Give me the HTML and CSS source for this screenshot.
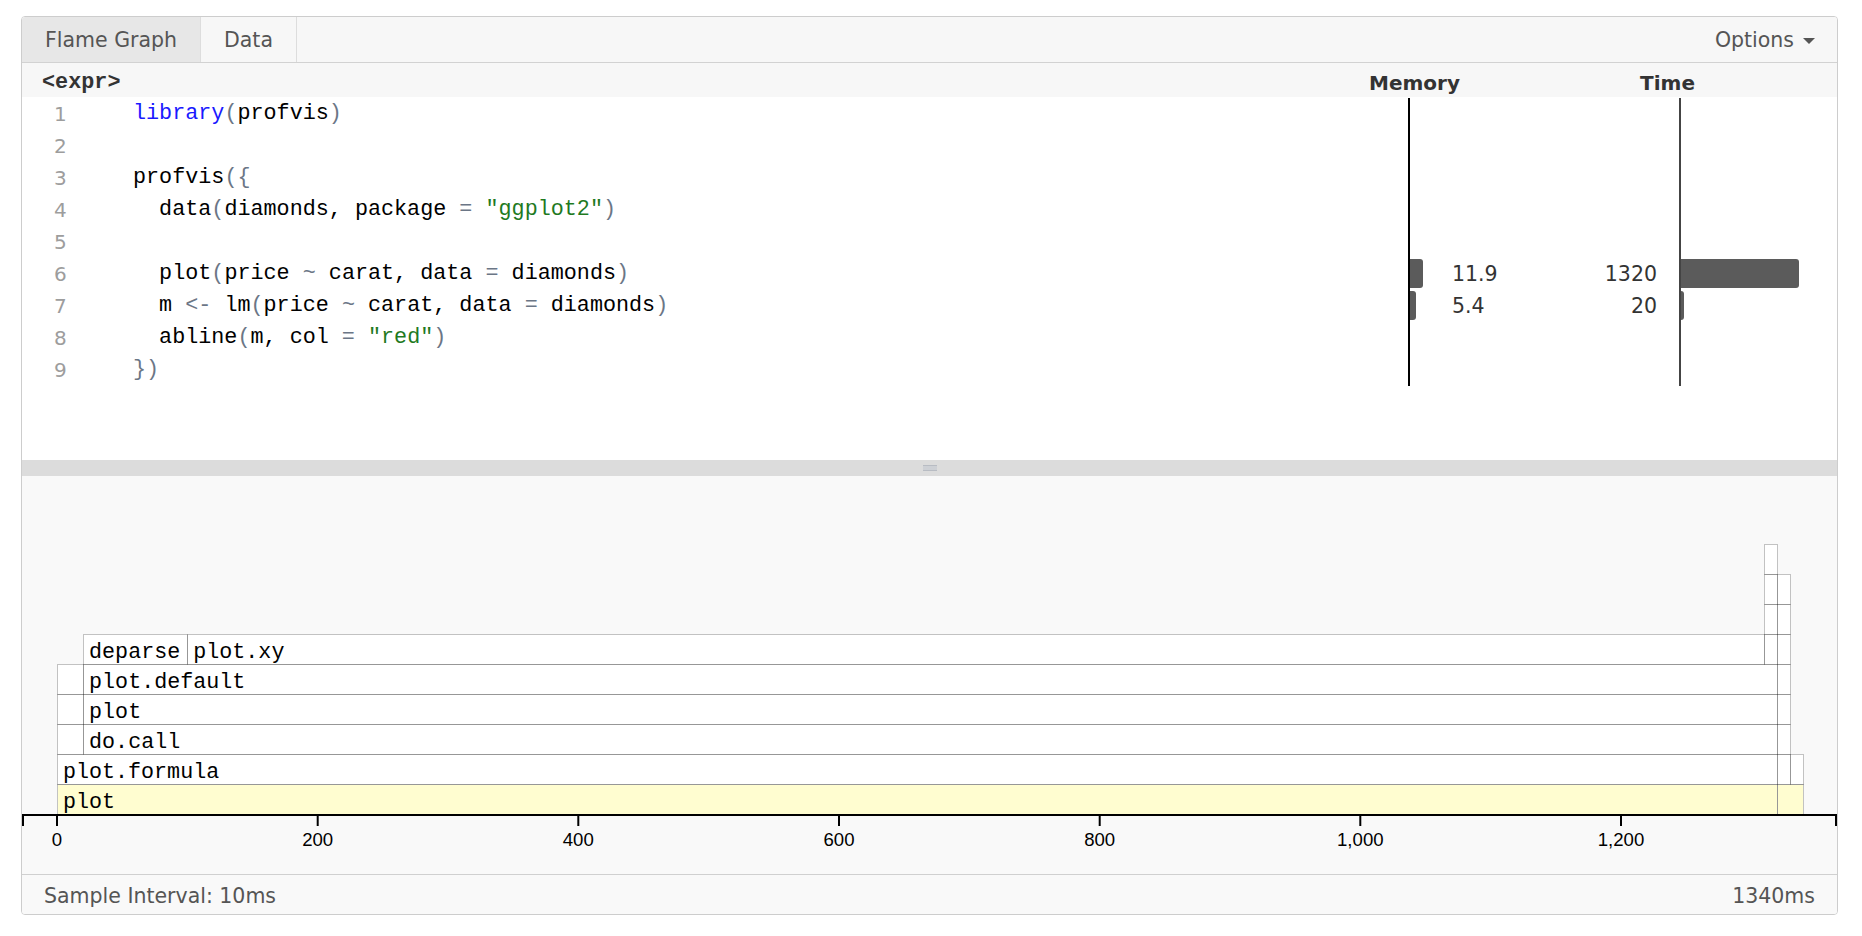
FILE: index.html
```html
<!DOCTYPE html>
<html>
<head>
<meta charset="utf-8">
<title>profvis</title>
<link rel="stylesheet" href="styles.css">
</head>
<body>
<div class="panel">
  <div class="tabbar">
    <div class="tab tab-flame active">Flame Graph</div>
    <div class="tab tab-data">Data</div>
    <div class="options">Options<span class="caret"></span></div>
  </div>

  <div class="code">
    <div class="codehead">
      <div class="expr">&lt;expr&gt;</div>
      <div class="hmem">Memory</div>
      <div class="htime">Time</div>
    </div>
    <div class="rows">
      <div class="row"><div class="ln">1</div><div class="src"><span class="kw">library</span><span class="pu">(</span>profvis<span class="pu">)</span></div><div class="membar"></div><div class="memval"></div><div class="timeval"></div><div class="timebar"></div></div>
      <div class="row"><div class="ln">2</div><div class="src"></div><div class="membar"></div><div class="memval"></div><div class="timeval"></div><div class="timebar"></div></div>
      <div class="row"><div class="ln">3</div><div class="src">profvis<span class="pu">({</span></div><div class="membar"></div><div class="memval"></div><div class="timeval"></div><div class="timebar"></div></div>
      <div class="row"><div class="ln">4</div><div class="src">  data<span class="pu">(</span>diamonds, package <span class="pu">=</span> <span class="st">"ggplot2"</span><span class="pu">)</span></div><div class="membar"></div><div class="memval"></div><div class="timeval"></div><div class="timebar"></div></div>
      <div class="row"><div class="ln">5</div><div class="src"></div><div class="membar"></div><div class="memval"></div><div class="timeval"></div><div class="timebar"></div></div>
      <div class="row"><div class="ln">6</div><div class="src">  plot<span class="pu">(</span>price <span class="pu">~</span> carat, data <span class="pu">=</span> diamonds<span class="pu">)</span></div><div class="membar"><div class="bar" style="width:13px"></div></div><div class="memval">11.9</div><div class="timeval">1320</div><div class="timebar"><div class="bar" style="width:118px"></div></div></div>
      <div class="row"><div class="ln">7</div><div class="src">  m <span class="pu">&lt;-</span> lm<span class="pu">(</span>price <span class="pu">~</span> carat, data <span class="pu">=</span> diamonds<span class="pu">)</span></div><div class="membar"><div class="bar" style="width:6px"></div></div><div class="memval">5.4</div><div class="timeval">20</div><div class="timebar"><div class="bar" style="width:3px"></div></div></div>
      <div class="row"><div class="ln">8</div><div class="src">  abline<span class="pu">(</span>m, col <span class="pu">=</span> <span class="st">"red"</span><span class="pu">)</span></div><div class="membar"></div><div class="memval"></div><div class="timeval"></div><div class="timebar"></div></div>
      <div class="row"><div class="ln">9</div><div class="src"><span class="pu">})</span></div><div class="membar"></div><div class="memval"></div><div class="timeval"></div><div class="timebar"></div></div>
    </div>
  </div>

  <div class="resizer"><div class="handle"></div></div>

  <div class="flame">
    <div class="cell hl" style="left:35px;top:308px;width:1721.4px">plot</div>
    <div class="cell hl" style="left:1755.4px;top:308px;width:27.1px"></div>

    <div class="cell" style="left:35px;top:278px;width:1721.4px">plot.formula</div>
    <div class="cell" style="left:1755.4px;top:278px;width:14px"></div>
    <div class="cell" style="left:1768.4px;top:278px;width:14px"></div>

    <div class="cell" style="left:35px;top:248px;width:27.1px"></div>
    <div class="cell" style="left:61.1px;top:248px;width:1695.3px">do.call</div>
    <div class="cell" style="left:1755.4px;top:248px;width:14px"></div>

    <div class="cell" style="left:35px;top:218px;width:27.1px"></div>
    <div class="cell" style="left:61.1px;top:218px;width:1695.3px">plot</div>
    <div class="cell" style="left:1755.4px;top:218px;width:14px"></div>

    <div class="cell" style="left:35px;top:188px;width:27.1px"></div>
    <div class="cell" style="left:61.1px;top:188px;width:1695.3px">plot.default</div>
    <div class="cell" style="left:1755.4px;top:188px;width:14px"></div>

    <div class="cell" style="left:61.1px;top:158px;width:105.3px">deparse</div>
    <div class="cell" style="left:165.3px;top:158px;width:1578px">plot.xy</div>
    <div class="cell" style="left:1742.4px;top:158px;width:14px"></div>
    <div class="cell" style="left:1755.4px;top:158px;width:14px"></div>

    <div class="cell" style="left:1742.4px;top:128px;width:14px"></div>
    <div class="cell" style="left:1755.4px;top:128px;width:14px"></div>

    <div class="cell" style="left:1742.4px;top:98px;width:14px"></div>
    <div class="cell" style="left:1755.4px;top:98px;width:14px"></div>

    <div class="cell" style="left:1742.4px;top:68px;width:14px"></div>
  </div>

  <svg class="axis" width="1815" height="60" viewBox="0 0 1815 60">
    <path class="domain" d="M1,12V1H1814V12"></path>
    <g class="ticks">
      <line x1="35" y1="1" x2="35" y2="12"></line>
      <line x1="295.7" y1="1" x2="295.7" y2="12"></line>
      <line x1="556.3" y1="1" x2="556.3" y2="12"></line>
      <line x1="817" y1="1" x2="817" y2="12"></line>
      <line x1="1077.7" y1="1" x2="1077.7" y2="12"></line>
      <line x1="1338.3" y1="1" x2="1338.3" y2="12"></line>
      <line x1="1599" y1="1" x2="1599" y2="12"></line>
    </g>
    <g class="labels">
      <text x="35" y="32">0</text>
      <text x="295.7" y="32">200</text>
      <text x="556.3" y="32">400</text>
      <text x="817" y="32">600</text>
      <text x="1077.7" y="32">800</text>
      <text x="1338.3" y="32">1,000</text>
      <text x="1599" y="32">1,200</text>
    </g>
  </svg>

  <div class="footer">
    <span>Sample Interval: 10ms</span>
    <span>1340ms</span>
  </div>
</div>
</body>
</html>
```

FILE: styles.css
```css
body {
  margin: 0;
  background: #ffffff;
  font-family: "DejaVu Sans", "Open Sans", sans-serif;
}

.panel {
  margin: 16px 0 0 21px;
  width: 1817px;
  box-sizing: border-box;
  border: 1px solid #cdcdcd;
  border-radius: 4px;
  overflow: hidden;
  background: #ffffff;
}

/* tab bar */
.tabbar {
  display: flex;
  height: 46px;
  box-sizing: border-box;
  border-bottom: 1px solid #d2d2d2;
  background: #f7f7f7;
  font-size: 20.5px;
  color: #555555;
}

.tab {
  display: flex;
  align-items: center;
  justify-content: center;
  box-sizing: border-box;
  border-right: 1px solid #dddddd;
}

.tab-flame { width: 179px; }
.tab-data { width: 96px; }

.tab.active { background: #e7e7e7; }

.options {
  margin-left: auto;
  display: flex;
  align-items: center;
  gap: 9px;
  padding-right: 22px;
}

.caret {
  width: 0;
  height: 0;
  border-left: 6px solid transparent;
  border-right: 6px solid transparent;
  border-top: 6px solid #555555;
  margin-top: 2px;
}

/* code section */
.codehead {
  display: flex;
  align-items: center;
  height: 34px;
  box-sizing: border-box;
  padding-top: 5px;
  background: #f7f7f7;
}

.expr {
  flex: 1;
  padding-left: 20px;
  font-family: "Liberation Mono", monospace;
  font-weight: bold;
  font-size: 21.8px;
  color: #333333;
}

.hmem,
.htime {
  text-align: center;
  font-weight: bold;
  font-size: 20px;
  color: #333333;
}

.hmem { width: 120px; }
.htime { width: 80px; margin-left: 153px; margin-right: 129.5px; }

.rows {
  height: 363px;
  box-sizing: border-box;
  padding-top: 1px;
}

.row {
  display: grid;
  grid-template-columns: 111px 1275px 32px 120px 119px 1fr;
  height: 32px;
}

.ln {
  padding-left: 32px;
  font-size: 20px;
  line-height: 32px;
  color: #9d9d9d;
}

.src {
  font-family: "Liberation Mono", monospace;
  font-size: 21.75px;
  line-height: 32px;
  white-space: pre;
  color: #000000;
}

.kw { color: #1a1aff; }
.st { color: #1f7a1f; }
.pu { color: #6b7686; }

.membar { border-left: 2px solid #000000; }
.timebar { border-left: 2px solid #444444; }

.bar {
  height: 29px;
  margin-top: 1px;
  background: #5b5b5b;
  border-radius: 0 3px 3px 0;
}

.memval,
.timeval {
  font-size: 20.5px;
  line-height: 32px;
  color: #333333;
}

.memval { padding-left: 12px; }
.timeval { text-align: right; padding-right: 22px; }

/* resizer */
.resizer {
  height: 16px;
  background: #dcdcdc;
  display: flex;
  align-items: center;
  justify-content: center;
}

.handle {
  width: 14px;
  height: 6px;
  background: linear-gradient(#b8bcc3 0, #b8bcc3 1px, #cdd0d5 1px, #cdd0d5 5px, #b8bcc3 5px);
}

/* flame graph */
.flame {
  position: relative;
  height: 338px;
  background: #f9f9f9;
  overflow: hidden;
}

.cell {
  position: absolute;
  height: 31px;
  box-sizing: border-box;
  border: 1px solid rgba(0, 0, 0, 0.22);
  background: #ffffff;
  background-clip: padding-box;
  padding: 3px 0 0 5px;
  font-family: "Liberation Mono", monospace;
  font-size: 21.7px;
  line-height: 29px;
  white-space: nowrap;
  overflow: hidden;
  color: #000000;
}

.cell.hl { background-color: #fffdd0; }

/* axis */
.axis {
  display: block;
  background: #f9f9f9;
}

.axis .domain {
  fill: none;
  stroke: #000000;
  stroke-width: 2;
}

.axis .ticks line {
  stroke: #000000;
  stroke-width: 2;
}

.axis .labels text {
  font-family: "Liberation Sans", Arial, sans-serif;
  font-size: 18.6px;
  text-anchor: middle;
  fill: #000000;
}

/* footer */
.footer {
  display: flex;
  justify-content: space-between;
  align-items: center;
  height: 40px;
  box-sizing: border-box;
  padding: 3px 22px 0 22px;
  border-top: 1px solid #d0d0d0;
  background: #f9f9f9;
  font-size: 20.5px;
  color: #555555;
}
```
